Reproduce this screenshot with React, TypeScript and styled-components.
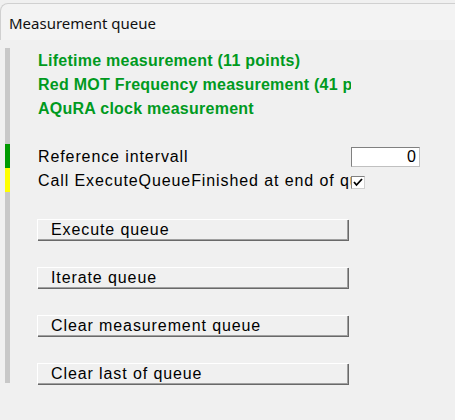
import React from 'react';
import styled, { createGlobalStyle } from 'styled-components';

const GlobalStyle = createGlobalStyle`
    html, body {
        margin: 0;
        padding: 0;
        background: #f0f0f0;
    }
    body {
        font-family: "Liberation Sans", Arial, sans-serif;
    }
`;

const queueItems = [
    'Lifetime measurement (11 points)',
    'Red MOT Frequency measurement (41 points)',
    'AQuRA clock measurement',
];

const actions = ['Execute queue', 'Iterate queue', 'Clear measurement queue', 'Clear last of queue'];

const App = () => {
    return (
        <>
            <GlobalStyle />
            <Window>
                <TitleBar>Measurement queue</TitleBar>
                <Main>
                    <SideBar>
                        <Segment $color="#c8c8c8" $height={96} />
                        <Segment $color="#009a00" $height={24} />
                        <Segment $color="#ffff00" $height={24} />
                        <Segment $color="#c8c8c8" $grow />
                    </SideBar>
                    <Content>
                        {queueItems.map((item) => (
                            <Row key={item}>
                                <Label $green>{item}</Label>
                            </Row>
                        ))}
                        <Row />
                        <Row>
                            <Label>Reference intervall</Label>
                            <NumberField>0</NumberField>
                        </Row>
                        <Row>
                            <Label>Call ExecuteQueueFinished at end of queue</Label>
                            <CheckBox>
                                <svg width="10" height="9" viewBox="0 0 10 9">
                                    <path d="M1 4 L3.5 7 L9 1" fill="none" stroke="#000" strokeWidth="1.8" />
                                </svg>
                            </CheckBox>
                        </Row>
                        <Buttons>
                            {actions.map((action) => (
                                <Button key={action}>{action}</Button>
                            ))}
                        </Buttons>
                    </Content>
                </Main>
            </Window>
        </>
    );
};

const Window = styled.div`
    width: 455px;
    height: 420px;
    overflow: hidden;
    padding-top: 3px;
    box-sizing: border-box;
    background: #f0f0f0;
`;

const TitleBar = styled.div`
    height: 37px;
    box-sizing: border-box;
    padding: 10px 0 0 8px;
    background: #f3f3f3;
    border-top: 1px solid #d0d0d0;
    border-left: 1px solid #d0d0d0;
    border-top-left-radius: 8px;
    font-family: "Noto Sans", "Open Sans", sans-serif;
    font-size: 15px;
    line-height: 18px;
    color: #111;
`;

const Main = styled.div`
    display: flex;
    padding: 8px 0 0 5px;
`;

const SideBar = styled.div`
    display: flex;
    flex-direction: column;
    width: 5px;
    height: 335px;
`;

const Segment = styled.div<{ $color: string; $height?: number; $grow?: boolean }>`
    background: ${({ $color }) => $color};
    height: ${({ $height }) => ($height ? `${$height}px` : 'auto')};
    flex: ${({ $grow }) => ($grow ? 1 : 'none')};
`;

const Content = styled.div`
    display: flex;
    flex-direction: column;
    margin-left: 28px;
    padding-top: 1px;
`;

const Row = styled.div`
    display: flex;
    align-items: center;
    height: 24px;
`;

const Label = styled.div<{ $green?: boolean }>`
    width: 313px;
    overflow: hidden;
    white-space: nowrap;
    font-size: 16px;
    letter-spacing: ${({ $green }) => ($green ? '0.25px' : '0.9px')};
    font-weight: ${({ $green }) => ($green ? 'bold' : 'normal')};
    color: ${({ $green }) => ($green ? '#009a1e' : '#000')};
`;

const NumberField = styled.div`
    width: 69px;
    height: 20px;
    box-sizing: border-box;
    padding-right: 3px;
    background: #fff;
    border: 1px solid #808080;
    border-right-color: #c0c0c0;
    border-bottom-color: #c0c0c0;
    text-align: right;
    font-size: 16px;
    line-height: 18px;
    color: #000;
`;

const CheckBox = styled.div`
    display: flex;
    align-items: center;
    justify-content: center;
    width: 14px;
    height: 13px;
    box-sizing: border-box;
    background: #fff;
    border: 1px solid #808080;
    border-right-color: #d0d0d0;
    border-bottom-color: #d0d0d0;
    margin-top: 2px;
`;

const Buttons = styled.div`
    display: flex;
    flex-direction: column;
    gap: 27px;
    margin-top: 26px;
`;

const Button = styled.button`
    width: 311px;
    height: 21px;
    box-sizing: border-box;
    margin-left: -1px;
    padding: 0 0 0 13px;
    text-align: left;
    background: #f0f0f0;
    border: none;
    border-top: 1px solid #fff;
    border-left: 1px solid #fff;
    box-shadow: inset -1px -1px 0 #a0a0a0, 1px 1px 0 #696969;
    font-family: "Liberation Sans", Arial, sans-serif;
    font-size: 16px;
    letter-spacing: 0.9px;
    color: #000;
`;

export default App;
